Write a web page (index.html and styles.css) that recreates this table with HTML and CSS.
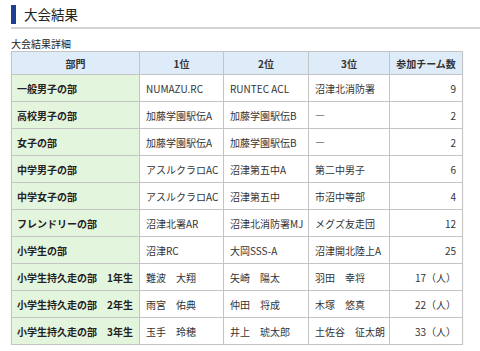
FILE: index.html
```html
<!DOCTYPE html>
<html lang="ja">
<head>
<meta charset="utf-8">
<link rel="stylesheet" href="styles.css">
</head>
<body>
<div class="page">
  <h1 class="title"><span class="title-bar"></span><span class="title-text">大会結果</span></h1>
  <div class="content">
    <p class="caption">大会結果詳細</p>
    <table class="results">
      <colgroup>
        <col class="c-div"><col class="c-1"><col class="c-2"><col class="c-3"><col class="c-n">
      </colgroup>
      <thead>
        <tr><th>部門</th><th>1位</th><th>2位</th><th>3位</th><th>参加チーム数</th></tr>
      </thead>
      <tbody>
        <tr><th>一般男子の部</th><td>NUMAZU.RC</td><td>RUNTEC ACL</td><td>沼津北消防署</td><td class="num">9</td></tr>
        <tr><th>高校男子の部</th><td>加藤学園駅伝A</td><td>加藤学園駅伝B</td><td>―</td><td class="num">2</td></tr>
        <tr><th>女子の部</th><td>加藤学園駅伝A</td><td>加藤学園駅伝B</td><td>―</td><td class="num">2</td></tr>
        <tr><th>中学男子の部</th><td>アスルクラロAC</td><td>沼津第五中A</td><td>第二中男子</td><td class="num">6</td></tr>
        <tr><th>中学女子の部</th><td>アスルクラロAC</td><td>沼津第五中</td><td>市沼中等部</td><td class="num">4</td></tr>
        <tr><th>フレンドリーの部</th><td>沼津北署AR</td><td>沼津北消防署MJ</td><td>メグズ友走団</td><td class="num">12</td></tr>
        <tr><th>小学生の部</th><td>沼津RC</td><td>大岡SSS-A</td><td>沼津開北陸上A</td><td class="num">25</td></tr>
        <tr><th>小学生持久走の部　1年生</th><td>難波　大翔</td><td>矢崎　陽太</td><td>羽田　幸将</td><td class="num">17（人）</td></tr>
        <tr><th>小学生持久走の部　2年生</th><td>雨宮　佑典</td><td>仲田　将成</td><td>木塚　悠真</td><td class="num">22（人）</td></tr>
        <tr><th>小学生持久走の部　3年生</th><td>玉手　玲穂</td><td>井上　琥太郎</td><td>土佐谷　征太朗</td><td class="num">33（人）</td></tr>
      </tbody>
    </table>
  </div>
</div>
</body>
</html>
```

FILE: styles.css
```css
html, body {
  margin: 0;
  padding: 0;
  background: #fff;
}
body {
  font-family: "Noto Sans CJK JP", "Noto Sans", sans-serif;
  color: #333;
}
.page {
  width: 480px;
  padding-top: 4px;
}
.title {
  margin: 0 0 0 11px;
  display: flex;
  align-items: center;
  gap: 8px;
  height: 20px;
  padding-bottom: 3px;
  border-bottom: 2px solid #d4d4d4;
  font-weight: normal;
  font-size: 13.5px;
  color: #222;
}
.title-bar {
  width: 5px;
  height: 19px;
  background: #1c3f94;
}
.title-text {
  line-height: 20px;
}
.content {
  padding: 0 0 0 11px;
}
.caption {
  margin: 8px 0 0;
  font-size: 10px;
  line-height: 14px;
  color: #222;
}
.results {
  border-collapse: collapse;
  table-layout: fixed;
  width: 451px;
  font-size: 10px;
  box-shadow: 0 1px 1px rgba(0,0,0,0.15);
}
.c-div { width: 128px; }
.c-1 { width: 84px; }
.c-2 { width: 85px; }
.c-3 { width: 81px; }
.c-n { width: 73px; }
.results th, .results td {
  border: 1px solid #c4c4c4;
  padding: 0 5px;
  white-space: nowrap;
  overflow: hidden;
}
.results thead th {
  height: 22px;
  background: #deebf8;
  text-align: center;
  font-weight: bold;
  color: #333;
}
.results tbody th {
  height: 26px;
  background: #e4f5de;
  text-align: left;
  font-weight: bold;
  color: #222;
}
.results tbody td {
  height: 26px;
  color: #333;
  padding-left: 6px;
}
.results td.num {
  text-align: right;
  padding-right: 6px;
}
```
